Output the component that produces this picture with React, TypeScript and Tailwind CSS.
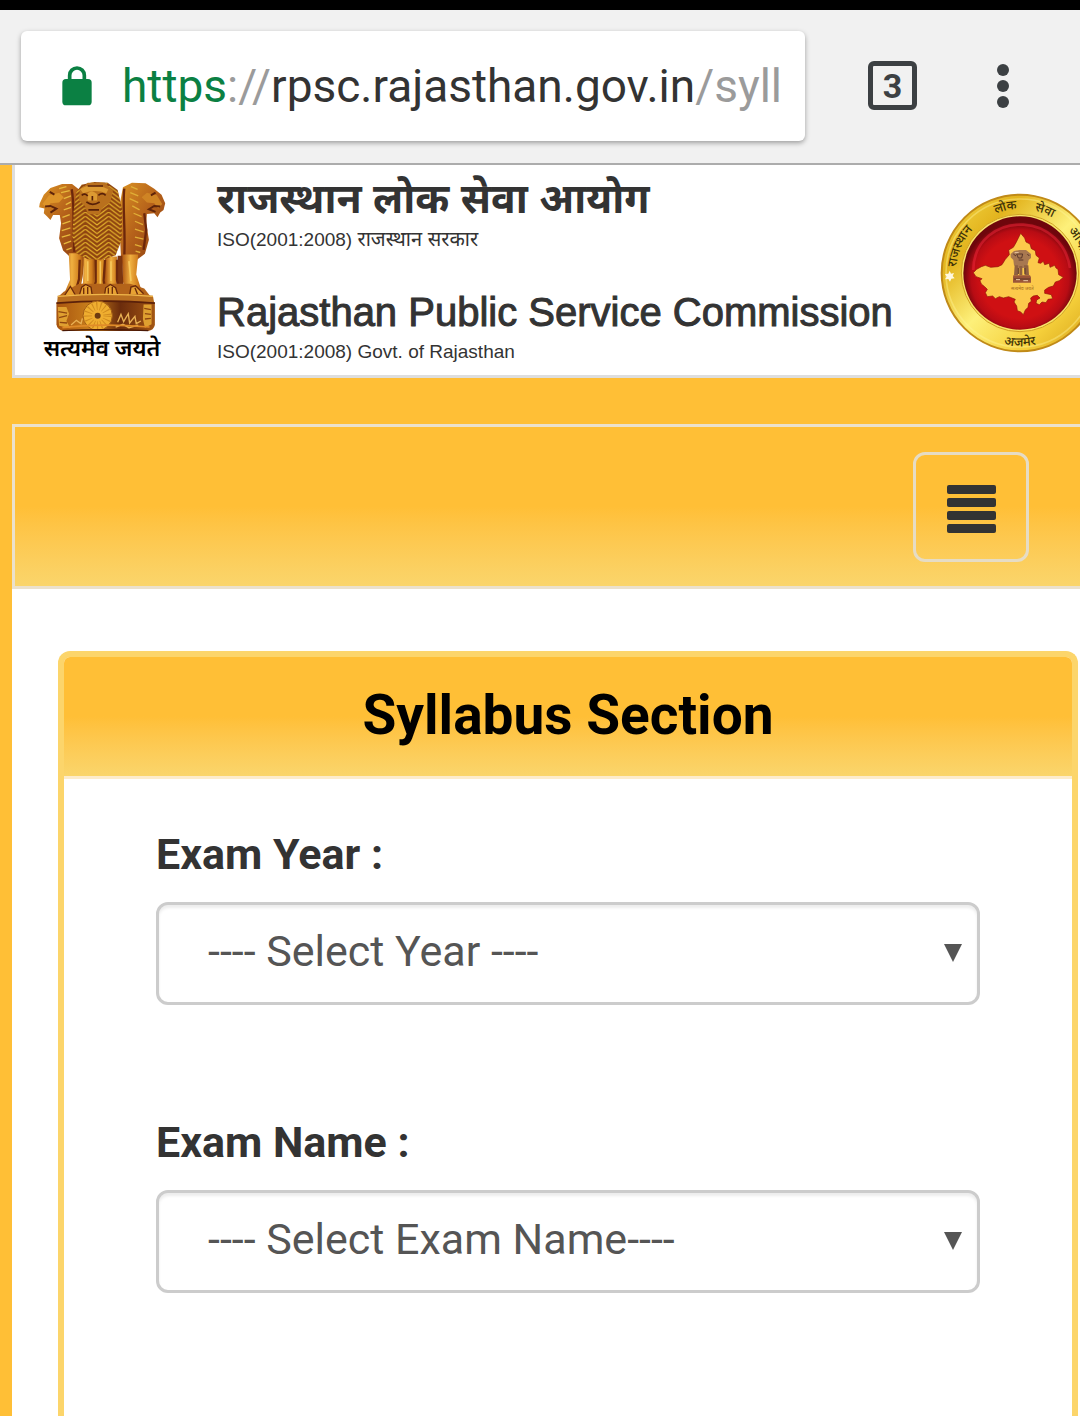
import { clsx } from "clsx";

const years = ["2018", "2017", "2016", "2015"];
const exams = ["RAS / RTS", "School Lecturer", "Sub Inspector", "Librarian"];

function LockIcon() {
  return (
    <svg viewBox="0 0 90 120" className="h-10 w-[30px] shrink-0" aria-hidden="true">
      <path d="M23 48V28a22 22 0 0 1 44 0v20" fill="none" stroke="#0b8043" strokeWidth="11" />
      <rect x="1" y="39" width="88" height="79" rx="11" fill="#0b8043" />
    </svg>
  );
}

function LionEmblem() {
  return (
    <svg viewBox="110 60 390 460" className="h-[153px] w-[130px]" role="img" aria-label="State emblem">
      <defs>
        <linearGradient id="bronze" x1="0" x2="1" y1="0" y2="1">
          <stop offset="0" stopColor="#dc9424" />
          <stop offset="0.5" stopColor="#b4601a" />
          <stop offset="1" stopColor="#8a3c10" />
        </linearGradient>
        <linearGradient id="leg" x1="0" x2="1">
          <stop offset="0" stopColor="#a9500f" />
          <stop offset="0.4" stopColor="#f0b040" />
          <stop offset="0.75" stopColor="#cf7c1c" />
          <stop offset="1" stopColor="#7a300c" />
        </linearGradient>
        <linearGradient id="plinth" x1="0" x2="1">
          <stop offset="0" stopColor="#a8540f" />
          <stop offset="0.35" stopColor="#c9801c" />
          <stop offset="0.65" stopColor="#6b2c0c" />
          <stop offset="1" stopColor="#a35614" />
        </linearGradient>
        <pattern id="mane" width="70" height="13" patternUnits="userSpaceOnUse" x="255">
          <path d="M0 -13 35 13 70 -13M0 0 35 26 70 0M0 -26 35 0 70 -26" fill="none" stroke="#e6b52c" strokeWidth="3.5" />
        </pattern>
      </defs>
      {/* side lions */}
      <path d="M118 130 130 104 150 84 185 72 215 72 238 90 250 150 245 280 210 292 188 272 176 235 182 190 178 165 158 165 150 180 140 170 130 160 132 146 116 142Z" fill="url(#bronze)" />
      <path d="M495 130 484 104 462 86 436 70 395 68 368 82 355 150 362 290 410 300 434 282 446 240 438 190 440 162 462 160 472 172 480 158 490 150Z" fill="url(#bronze)" />
      <path d="M126 132 146 106 176 98 190 112 176 128 150 130 140 146Z" fill="#dd9429" />
      <path d="M486 132 470 106 440 98 424 112 440 128 462 130 474 146Z" fill="#cf8424" />
      <path d="M134 140 150 138 168 146 150 158M480 140 462 138 446 148 466 156M148 96l14 8M466 98l-14 8" fill="none" stroke="#5e240a" strokeWidth="6" />
      <path d="M176 86l22-6M182 98l26-6M190 116l22-8M196 134l16-8M190 150l22-8M186 172l22-8M186 192l24-8M184 212l26-8M184 232l26-8M190 252l22-8M198 270l16-6" stroke="#e6b93c" strokeWidth="4" />
      <path d="M392 80l20 8M390 98l24 10M388 116l26 12M396 138l22 12M400 160l24 10M404 184l24 10M404 208l26 8M404 232l26 6M404 254l20 6M406 274l14 4" stroke="#e0ae36" strokeWidth="4" />
      <path d="M214 88C222 130 218 180 222 276M372 86C366 140 376 200 372 290M432 160l6 50-8 60" fill="none" stroke="#6c270b" strokeWidth="7" />
      {/* legs */}
      <path d="M205 280h50l-8 70-12 62h-48l22-52Z" fill="url(#leg)" />
      <path d="M250 290h38l-4 80-12 42h-38l14-44Z" fill="url(#leg)" />
      <path d="M284 296h28l4 116h-38Z" fill="#d98d22" />
      <path d="M314 290h36l-2 76 12 46h-46Z" fill="url(#leg)" />
      <path d="M364 284h50l-6 60 22 66h-52l-10-44Z" fill="url(#leg)" />
      <path d="M352 288h14l4 122h-14l-8-44Z" fill="#7d360f" />
      <path d="M286 300v66l-12 44M314 300l-4 62 6 50M350 300v60l14 50M238 300l-2 58-14 50" fill="none" stroke="#6f2a0b" strokeWidth="7" />
      <path d="M300 304v96M262 304v60M332 304v60M386 304l6 60" stroke="#f6c85c" strokeWidth="5" />
      {/* central lion */}
      <path d="M244 74 282 66 322 68 352 90 366 150 364 240 346 286 308 300 262 298 228 280 216 230 220 150 228 96Z" fill="#8f4410" />
      <path d="M244 74 282 66 322 68 352 90 366 150 364 240 346 286 308 300 262 298 228 280 216 230 220 150 228 96Z" fill="url(#mane)" />
      <path d="M238 92 262 68 314 68 338 92 330 126 304 146 298 164 262 162 254 138 236 122Z" fill="#b9701d" />
      <path d="M240 88q34-24 84 0l-6 12q-32-14-70 0ZM262 100q14-12 28 2v20h-28Z" fill="#dc9a32" />
      <path d="M244 106q10-8 18 2M294 106q12-10 22 0M258 126q18 14 40 0M264 150h32M276 108v14M262 78h46" fill="none" stroke="#571f08" strokeWidth="5" />
      {/* paws and abacus */}
      <path d="M190 396 236 372H390L432 386 452 412H172Z" fill="#b4641a" />
      <path d="M192 408l18-28 16 28M236 410l8-28 12-8 16 8 4 28M312 410l4-26 14-10 16 10 8 26M388 406l4-24 14-4 24 24" fill="#e8a233" stroke="#6b2a0b" strokeWidth="4" />
      <path d="M250 384v22M262 382v24M324 384v22M336 382v24M404 384l8 20" stroke="#6b2a0b" strokeWidth="4" />
      <path d="M172 408q146-12 286 0l4 22q-146-12-292 0Z" fill="#b96f20" />
      <path d="M172 410q146-12 286 0" fill="none" stroke="#efb64a" strokeWidth="4" />
      <path d="M168 428q148-12 296 0v68q-4 16-20 18H188q-18-4-20-20Z" fill="url(#plinth)" />
      <path d="M168 430q148-12 296 0" fill="none" stroke="#5b210a" strokeWidth="5" />
      <path d="M172 442h26l8 20-8 22 12 22-34-8ZM430 434h24v60l-20 10-6-26Z" fill="#dfa030" />
      <path d="M174 456l26 4M176 474l24-6M178 488l22 2M432 446l20 4M434 462l18 2M434 478l18-2" stroke="#8e4610" strokeWidth="4" />
      <circle cx="292" cy="468" r="44" fill="#efae30" stroke="#a05a16" strokeWidth="3" />
      <circle cx="292" cy="468" r="29" fill="none" stroke="#cf8a1e" strokeWidth="24" strokeDasharray="3 8" />
      <circle cx="292" cy="468" r="9" fill="#6d3c10" />
      <path d="M212 496l16-14 14 10 4-16M352 488l10-24 8 22 14-24 4 28 16-20 4 22 14-8M346 502l22-8 18 10 28-8" fill="none" stroke="#e9b154" strokeWidth="4" />
      <path d="M186 504q112-14 262-2" fill="none" stroke="#e08b28" strokeWidth="5" />
      <path d="M186 513q112-6 258 0" fill="none" stroke="#4a1906" strokeWidth="4" />
    </svg>
  );
}

function CommissionSeal() {
  return (
    <svg viewBox="60 39 480 480" className="h-40 w-40" role="img" aria-label="Commission seal">
      <defs>
        <linearGradient id="ring" x1="0" x2="1" y1="0" y2="1">
          <stop offset="0" stopColor="#f6dc4c" />
          <stop offset="0.25" stopColor="#e3b41e" />
          <stop offset="0.5" stopColor="#fdf07a" />
          <stop offset="0.75" stopColor="#f5cf3a" />
          <stop offset="1" stopColor="#d09a14" />
        </linearGradient>
        <radialGradient id="disc" cx="0.5" cy="0.55" r="0.5">
          <stop offset="0.7" stopColor="#cf1013" />
          <stop offset="0.86" stopColor="#b80c14" />
          <stop offset="1" stopColor="#6e060c" />
        </radialGradient>
        <path id="arcTop" d="M108 279a192 192 0 0 1 384 0" />
        <path id="arcBottom" d="M80 279a220 220 0 0 0 440 0" />
      </defs>
      <circle cx="300" cy="279" r="235" fill="url(#ring)" stroke="#c08a18" strokeWidth="6" />
      <circle cx="300" cy="279" r="222" fill="none" stroke="#fff59a" strokeWidth="5" opacity="0.4" />
      <circle cx="300" cy="279" r="176" fill="#f9e46a" stroke="#d0a024" strokeWidth="3" />
      <circle cx="300" cy="279" r="170" fill="url(#disc)" />
      <path d="M160 270C160 180 235 130 310 134s130 60 140 130" fill="none" stroke="#f0263a" strokeWidth="8" opacity="0.5" />
      <path
        d="M302 160l12 14 4 12 12 6 4 14 12 6 2 14 10 8-4 14 8 2 8-6 4 10 14-4 2 12 14-6 4 8 6 4 2 16 14 8-12 10-12 4-6 12-14 4-12 8 0 10 20 4 4 12-14 2-6 10-12-2-8 8-10-4 2-10 10-6-8-8-12 2-8 6 2 10-8 6-2 12-8 8-6 14-8-8-10-4-2-14-8-12 4-8-20-8-16 4-12-4-12 6-8-8-16 2-6-12 6-10-8-8-10-8-4-10 6-6-18-6-8-12 10-10 14-8 12-4 16 6 22-2 12-6 10-16 12-14-2-14 14-8 8-14Z"
        fill="#fcc94b"
        stroke="#8f1408"
        strokeWidth="2"
      />
      {/* small lion capital */}
      <path d="M272 222l10-9 16-3 20 0 15 12 0 12-7 6-4 18-12 6h-18l-10-8-2-16-8-8Z" fill="#a87850" />
      <path d="M284 256h10v30h-12ZM298 258h9v28h-9ZM312 256h13l2 30h-13Z" fill="#8f6040" />
      <path d="M280 286h50l3 6v16h-54v-16Z" fill="#9b5638" />
      <path d="M280 222l8 6M290 222h18l-3 12h-10ZM322 222l6 6M296 240h14M282 297h48M295 264v18M315 264v18" fill="none" stroke="#59362a" strokeWidth="3" />
      <path d="M288 299h12M310 302h14M284 218h12" stroke="#e8c8a4" strokeWidth="3" />
      <text x="307" y="330" textAnchor="middle" fontSize="14" fill="#a0681c" className="font-['Noto_Sans']">सत्यमेव जयते</text>
      <path d="M89 272l4 9 9-2-4 9 6 7-10 1-4 9-5-8-10 1 5-8-5-8 10-1Z" fill="#fff8e0" />
      <g fontSize="38" fontWeight="500" fill="#3d3208" className="font-['Noto_Sans']">
        <text><textPath href="#arcTop" startOffset="17">राजस्थान</textPath></text>
        <text><textPath href="#arcTop" startOffset="226">लोक</textPath></text>
        <text><textPath href="#arcTop" startOffset="345">सेवा</textPath></text>
        <text><textPath href="#arcTop" startOffset="464">आयोग</textPath></text>
        <text><textPath href="#arcBottom" startOffset="50%" textAnchor="middle">अजमेर</textPath></text>
      </g>
    </svg>
  );
}

function BrowserBar() {
  return (
    <div className="relative z-10 flex h-[165px] shrink-0 items-center border-t-[10px] border-b-2 border-t-black border-b-[#acacac] bg-[#f1f1f1] pb-0.5 pl-[21px]">
      <div className="flex h-[110px] min-w-0 flex-1 items-center rounded-md bg-white pl-[41px] shadow-[0_2px_5px_rgba(0,0,0,0.35)]">
        <LockIcon />
        <a href="#address" className="ml-[30px] overflow-hidden text-[46px] leading-[64px] whitespace-nowrap text-[#333]">
          <span className="text-[#0b8043]">https</span>
          <span className="text-[#9b9b9b]">://</span>
          rpsc.rajasthan.gov.in
          <span className="text-[#9b9b9b]">/syll</span>
        </a>
      </div>
      <button aria-label="Open tabs" className="ml-[63px] flex size-[49px] items-center justify-center rounded-md border-[5px] border-[#3c4043] font-[Roboto,sans-serif] text-[34px] leading-9 font-bold text-[#3c4043]">
        3
      </button>
      <button aria-label="More options" className="mr-[71px] ml-20 flex flex-col gap-1">
        <span className="size-3 rounded-full bg-[#3c4043]" />
        <span className="size-3 rounded-full bg-[#3c4043]" />
        <span className="size-3 rounded-full bg-[#3c4043]" />
      </button>
    </div>
  );
}

function SiteHeader() {
  return (
    <header className="flex h-[213px] shrink-0 border-b-[3px] border-l-[3px] border-[#dedede] bg-white">
      <div className="ml-[22px] flex w-[130px] shrink-0 flex-col items-center pt-[15px]">
        <LionEmblem />
        <p className="text-[23px] leading-8 font-semibold whitespace-nowrap text-black">सत्यमेव जयते</p>
      </div>
      <div className="ml-[50px] font-['Liberation_Sans','Noto_Sans',sans-serif] whitespace-nowrap text-[#333]">
        <h1 className="pt-2 text-[41px] leading-[52px] font-bold">राजस्थान लोक सेवा आयोग</h1>
        <p className="text-[19px] leading-7">
          ISO(2001:2008) <span className="text-[20px]">राजस्थान सरकार</span>
        </p>
        <h1 className="pt-8 text-[40px] leading-[52px] [-webkit-text-stroke:1px_#333]">Rajasthan Public Service Commission</h1>
        <p className="text-[19px] leading-7">ISO(2001:2008) Govt. of Rajasthan</p>
      </div>
      <div className="-mr-5 ml-auto shrink-0 pt-7">
        <CommissionSeal />
      </div>
    </header>
  );
}

function SiteNav() {
  return (
    <nav className="mt-[46px] flex h-[165px] shrink-0 items-start justify-end border-y-[3px] border-l-[3px] border-[#ebe1cc] bg-linear-to-b from-[#ffbf36] from-50% to-[#fad56b] pt-[25px] pr-[51px]">
      <button aria-label="Toggle navigation" className="flex h-[110px] w-[116px] flex-col items-center justify-center gap-1 rounded-xl border-[3px] border-[#e6dcc4] pt-1">
        <span className="h-[9px] w-[49px] rounded-xs bg-[#333]" />
        <span className="h-[9px] w-[49px] rounded-xs bg-[#333]" />
        <span className="h-[9px] w-[49px] rounded-xs bg-[#333]" />
        <span className="h-[9px] w-[49px] rounded-xs bg-[#333]" />
      </button>
    </nav>
  );
}

type SelectFieldProps = {
  id: string;
  label: string;
  placeholder: string;
  options: string[];
  className?: string;
};

function SelectField({ id, label, placeholder, options, className }: SelectFieldProps) {
  return (
    <div className={clsx("text-[43px]", className)}>
      <label htmlFor={id} className="block leading-[60px] font-bold text-[#333]">{label}</label>
      <div className="relative mt-[18px]">
        <select
          id={id}
          className="block h-[103px] w-full appearance-none rounded-xl border-[3px] border-[#ccc] bg-white pr-20 pb-1 pl-[49px] text-[#555] shadow-[inset_0_3px_3px_rgba(0,0,0,0.075)]"
        >
          <option>{placeholder}</option>
          {options.map((o) => (
            <option key={o}>{o}</option>
          ))}
        </select>
        <svg viewBox="0 0 18 18" className="pointer-events-none absolute top-[42px] right-[18px] size-[18px]" aria-hidden="true">
          <path d="M0 0h18L9 18Z" fill="#555" />
        </svg>
      </div>
    </div>
  );
}

export default function App() {
  return (
    <div className="flex min-h-screen flex-col overflow-hidden bg-[#ffbf36] font-[Roboto,'Noto_Sans',sans-serif]">
      <BrowserBar />
      <div className="ml-3 flex flex-1 flex-col">
        <SiteHeader />
        <SiteNav />
        <main className="flex flex-1 flex-col bg-white pt-[62px] pr-0.5 pl-[46px]">
          <section className="flex-1 rounded-t-xl border-x-[6px] border-t-[6px] border-[#fcd56b]">
            <h2 className="rounded-t-md border-b-[3px] border-[#fdeccb] bg-linear-to-b from-[#ffbf36] from-50% to-[#fad56b] pt-[22px] pb-[25px] text-center text-[55px] leading-[72px] font-bold text-black">
              Syllabus Section
            </h2>
            <form className="px-[92px] pt-[45px]">
              <SelectField id="year" label="Exam Year :" placeholder="---- Select Year ----" options={years} />
              <SelectField id="exam" label="Exam Name :" placeholder="---- Select Exam Name----" options={exams} className="mt-[107px]" />
            </form>
          </section>
        </main>
      </div>
    </div>
  );
}
